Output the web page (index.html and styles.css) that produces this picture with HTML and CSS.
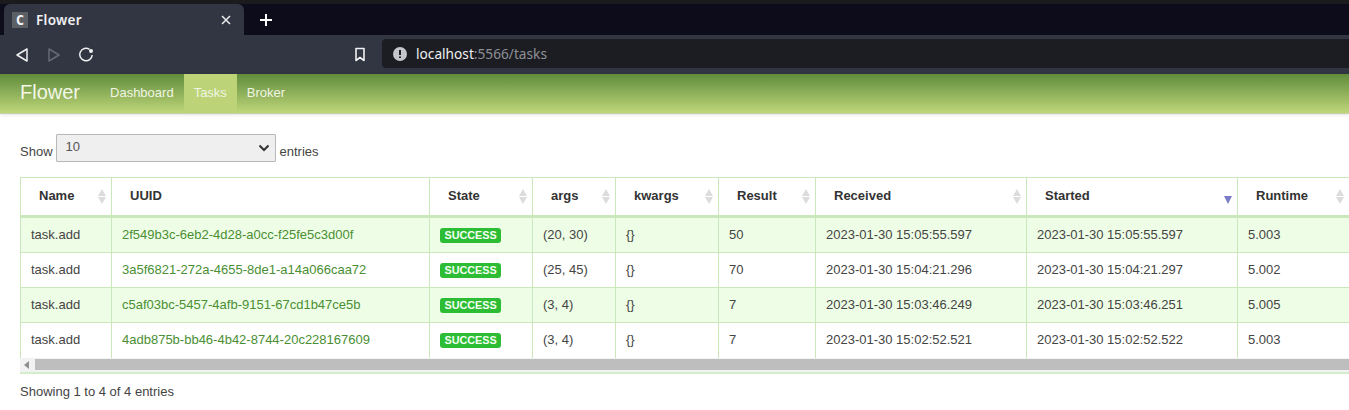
FILE: index.html
```html
<!DOCTYPE html>
<html lang="en">
<head>
    <meta charset="UTF-8">
    <meta name="viewport" content="width=device-width, initial-scale=1.0">
    <title>Flower</title>
    <link rel="stylesheet" href="styles.css">
</head>
<body>
    <div class="browser">
        <div class="tabstrip">
            <div class="tab">
                <span class="favicon">C</span>
                <span class="tab-title">Flower</span>
                <svg class="tab-close" width="12" height="12" viewBox="0 0 12 12"><path d="M2 2l8 8M10 2l-8 8" stroke="#e8e8ea" stroke-width="1.6" fill="none"/></svg>
            </div>
            <svg class="new-tab" width="14" height="14" viewBox="0 0 14 14"><path d="M7 1v12M1 7h12" stroke="#fff" stroke-width="2" fill="none"/></svg>
        </div>
        <div class="toolbar">
            <svg class="tool-back" width="14" height="16" viewBox="0 0 14 16"><path d="M12 2v12L2 8z" stroke="#f0f0f2" stroke-width="1.5" stroke-linejoin="round" fill="none"/></svg>
            <svg class="tool-forward" width="14" height="16" viewBox="0 0 14 16"><path d="M2 2v12l10-6z" stroke="#666a75" stroke-width="1.5" stroke-linejoin="round" fill="none"/></svg>
            <svg class="tool-reload" width="16" height="16" viewBox="0 0 16 16"><path d="M11.5 2.4A6.2 6.2 0 1 0 14.2 8" stroke="#f0f0f2" stroke-width="1.5" fill="none"/><circle cx="13" cy="4" r="2" fill="#f0f0f2"/></svg>
            <svg class="tool-mark" width="12" height="15" viewBox="0 0 12 15"><path d="M2 1.5h8v12L6 10.5l-4 3z" stroke="#f0f0f2" stroke-width="1.6" stroke-linejoin="round" fill="none"/></svg>
            <div class="urlbar">
                <svg width="14" height="14" viewBox="0 0 14 14"><circle cx="7" cy="7" r="7" fill="#c4c5c9"/><path d="M7 3v5M7 9.5v1.6" stroke="#1c1d22" stroke-width="2" fill="none"/></svg>
                <span class="url-host">localhost</span><span class="url-rest">:5566/tasks</span>
            </div>
        </div>
    </div>

    <nav class="navbar">
        <a class="brand">Flower</a>
        <a class="nav-link">Dashboard</a>
        <a class="nav-link active">Tasks</a>
        <a class="nav-link">Broker</a>
    </nav>

    <div class="content">
        <div class="length-row">
            <span class="length-label">Show</span>
            <div class="fake-select">
                <span>10</span>
                <svg width="12" height="8" viewBox="0 0 12 8"><path d="M1.5 1.5L6 6l4.5-4.5" stroke="#333" stroke-width="2" fill="none"/></svg>
            </div>
            <span class="length-label">entries</span>
        </div>

        <div class="table-wrap">
            <table class="tasks">
                <colgroup>
                    <col class="c-name"><col class="c-uuid"><col class="c-state"><col class="c-args"><col class="c-kwargs"><col class="c-result"><col class="c-received"><col class="c-started"><col class="c-runtime">
                </colgroup>
                <thead>
                    <tr>
                        <th>Name<i class="sort"></i></th>
                        <th>UUID</th>
                        <th>State<i class="sort"></i></th>
                        <th>args<i class="sort"></i></th>
                        <th>kwargs<i class="sort"></i></th>
                        <th>Result<i class="sort"></i></th>
                        <th>Received<i class="sort"></i></th>
                        <th>Started<i class="sort-desc"></i></th>
                        <th>Runtime<i class="sort"></i></th>
                    </tr>
                </thead>
                <tbody>
                    <tr class="odd">
                        <td>task.add</td>
                        <td><a>2f549b3c-6eb2-4d28-a0cc-f25fe5c3d00f</a></td>
                        <td><span class="badge">SUCCESS</span></td>
                        <td>(20, 30)</td>
                        <td>{}</td>
                        <td>50</td>
                        <td>2023-01-30 15:05:55.597</td>
                        <td>2023-01-30 15:05:55.597</td>
                        <td>5.003</td>
                    </tr>
                    <tr>
                        <td>task.add</td>
                        <td><a>3a5f6821-272a-4655-8de1-a14a066caa72</a></td>
                        <td><span class="badge">SUCCESS</span></td>
                        <td>(25, 45)</td>
                        <td>{}</td>
                        <td>70</td>
                        <td>2023-01-30 15:04:21.296</td>
                        <td>2023-01-30 15:04:21.297</td>
                        <td>5.002</td>
                    </tr>
                    <tr class="odd">
                        <td>task.add</td>
                        <td><a>c5af03bc-5457-4afb-9151-67cd1b47ce5b</a></td>
                        <td><span class="badge">SUCCESS</span></td>
                        <td>(3, 4)</td>
                        <td>{}</td>
                        <td>7</td>
                        <td>2023-01-30 15:03:46.249</td>
                        <td>2023-01-30 15:03:46.251</td>
                        <td>5.005</td>
                    </tr>
                    <tr>
                        <td>task.add</td>
                        <td><a>4adb875b-bb46-4b42-8744-20c228167609</a></td>
                        <td><span class="badge">SUCCESS</span></td>
                        <td>(3, 4)</td>
                        <td>{}</td>
                        <td>7</td>
                        <td>2023-01-30 15:02:52.521</td>
                        <td>2023-01-30 15:02:52.522</td>
                        <td>5.003</td>
                    </tr>
                </tbody>
            </table>
            <div class="scrollbar">
                <svg width="6" height="8" viewBox="0 0 6 8"><path d="M5 0v8L0 4z" fill="#8f8f8f"/></svg>
                <div class="scroll-thumb"></div>
            </div>
        </div>

        <div class="info">Showing 1 to 4 of 4 entries</div>
    </div>
</body>
</html>
```

FILE: styles.css
```css
* {
    box-sizing: border-box;
}

html, body {
    margin: 0;
    padding: 0;
    height: 410px;
    overflow: hidden;
}

body {
    font-family: "Liberation Sans", Arial, sans-serif;
    font-size: 13px;
    color: #444;
    background-color: #fff;
}

/* browser chrome */
.browser {
    background-color: #1b1b1d;
    padding-top: 4px;
}

.tabstrip {
    display: flex;
    align-items: center;
    height: 31px;
    background-color: #0c0c1a;
}

.tab {
    display: flex;
    align-items: center;
    width: 240px;
    height: 31px;
    margin-left: 4px;
    padding: 0 4px 0 8px;
    background-color: #323642;
    border-radius: 6px 6px 0 0;
}

.favicon {
    width: 16px;
    height: 16px;
    background-color: #5c5f66;
    color: #f2f2f2;
    font-family: "DejaVu Sans Mono", monospace;
    font-size: 14px;
    font-weight: bold;
    line-height: 16px;
    text-align: center;
}

.tab-title {
    flex: 1;
    margin-left: 8px;
    color: #f0f0f2;
    font-family: "Noto Sans", sans-serif;
    font-size: 13.5px;
    font-weight: 600;
    letter-spacing: 0.3px;
}

.tab-close {
    margin-right: 8px;
}

.new-tab {
    margin-left: 15px;
}

.toolbar {
    display: flex;
    align-items: center;
    height: 39px;
    padding-left: 15px;
    background-color: #323642;
}

.tool-forward {
    margin-left: 18px;
}

.tool-reload {
    margin-left: 17px;
}

.tool-mark {
    margin-left: 260px;
}

.urlbar {
    display: flex;
    align-items: center;
    flex: 1;
    height: 29px;
    margin: 0 0 2px 16px;
    padding-left: 11px;
    background-color: #1c1d22;
    border-radius: 4px 0 0 4px;
    font-family: "Noto Sans", sans-serif;
    font-size: 13.7px;
}

.url-host {
    margin-left: 9px;
    color: #f0f0f2;
}

.url-rest {
    color: #8e9096;
}

/* flower navbar */
.navbar {
    display: flex;
    align-items: stretch;
    height: 40px;
    padding-left: 20px;
    background-image: linear-gradient(to bottom, #5f8c3b, #bfd67a);
    border-bottom: 1px solid #c5cfa8;
    box-shadow: 0 1px 3px rgba(0, 0, 0, 0.12);
}

.brand {
    margin-right: 20px;
    padding-top: 7px;
    color: #f2f7e6;
    font-size: 20px;
}

.nav-link {
    padding: 11px 10px 0;
    color: #f0f5e4;
    font-size: 13px;
}

.nav-link.active {
    background-color: #bcd377;
}

/* page content */
.content {
    padding: 20px 0 0 20px;
}

.length-row {
    display: flex;
    align-items: center;
    gap: 3px;
    height: 28px;
}

.length-label {
    padding-top: 6px;
}

.fake-select {
    display: flex;
    align-items: center;
    justify-content: space-between;
    width: 220px;
    height: 28px;
    margin-right: 1px;
    padding: 0 5px 4px 9px;
    background-color: #efefef;
    border: 1px solid #b8b8b8;
    border-radius: 1px;
    color: #555;
}

.fake-select svg {
    margin-top: 3px;
}

.table-wrap {
    width: 1329px;
    margin-top: 15px;
    border-top: 1px solid #cbe8bd;
    border-bottom: 2px solid #d5edca;
}

.tasks {
    width: 1329px;
    table-layout: fixed;
    border-collapse: separate;
    border-spacing: 0;
}

.c-name { width: 92px; }
.c-uuid { width: 318px; }
.c-state { width: 103px; }
.c-args { width: 83px; }
.c-kwargs { width: 103px; }
.c-result { width: 97px; }
.c-received { width: 211px; }
.c-started { width: 211px; }
.c-runtime { width: 111px; }

.tasks th {
    position: relative;
    height: 40px;
    padding: 0 18px 2px;
    background-color: #fff;
    border-right: 1px solid #cbe8bd;
    border-bottom: 3px solid #cbe8bd;
    color: #333;
    font-size: 13px;
    font-weight: bold;
    text-align: left;
}

.tasks td {
    height: 35px;
    padding: 0 10px 2px;
    border-right: 1px solid #cbe8bd;
    border-bottom: 1px solid #cbe8bd;
    white-space: nowrap;
}

.tasks th:first-child,
.tasks td:first-child {
    border-left: 1px solid #cbe8bd;
}

.tasks th:last-child,
.tasks td:last-child {
    border-right: none;
}

.tasks tbody tr:last-child td {
    border-bottom: none;
}

.tasks tr.odd td {
    background-color: #eefde6;
}

.tasks a {
    color: #4a8f33;
}

.badge {
    display: inline-block;
    margin-top: 2px;
    padding: 0 4.5px;
    background-color: #2dbd35;
    border-radius: 3px;
    color: #f4fff2;
    font-size: 10.8px;
    font-weight: bold;
    line-height: 15px;
    vertical-align: middle;
}

/* sort arrows sit over the header cell */
.sort {
    position: absolute;
    right: 4px;
    top: 11px;
    width: 9px;
    height: 15px;
}

.sort::before,
.sort::after {
    content: "";
    position: absolute;
    left: 0;
    border-left: 4.5px solid transparent;
    border-right: 4.5px solid transparent;
}

.sort::before {
    top: 0;
    border-bottom: 7px solid #dcdcdc;
}

.sort::after {
    bottom: 0;
    border-top: 7px solid #dcdcdc;
}

.sort-desc {
    position: absolute;
    right: 5px;
    bottom: 11px;
    border-left: 4.5px solid transparent;
    border-right: 4.5px solid transparent;
    border-top: 8px solid #7b7bc8;
}

.scrollbar {
    display: flex;
    align-items: center;
    height: 14px;
    padding-left: 4px;
    background-color: #f2f2f2;
}

.scroll-thumb {
    flex: 1;
    height: 11px;
    margin: 0 0 1px 5px;
    background-color: #bebebe;
}

.info {
    margin-top: 10px;
    line-height: 15px;
}
```
